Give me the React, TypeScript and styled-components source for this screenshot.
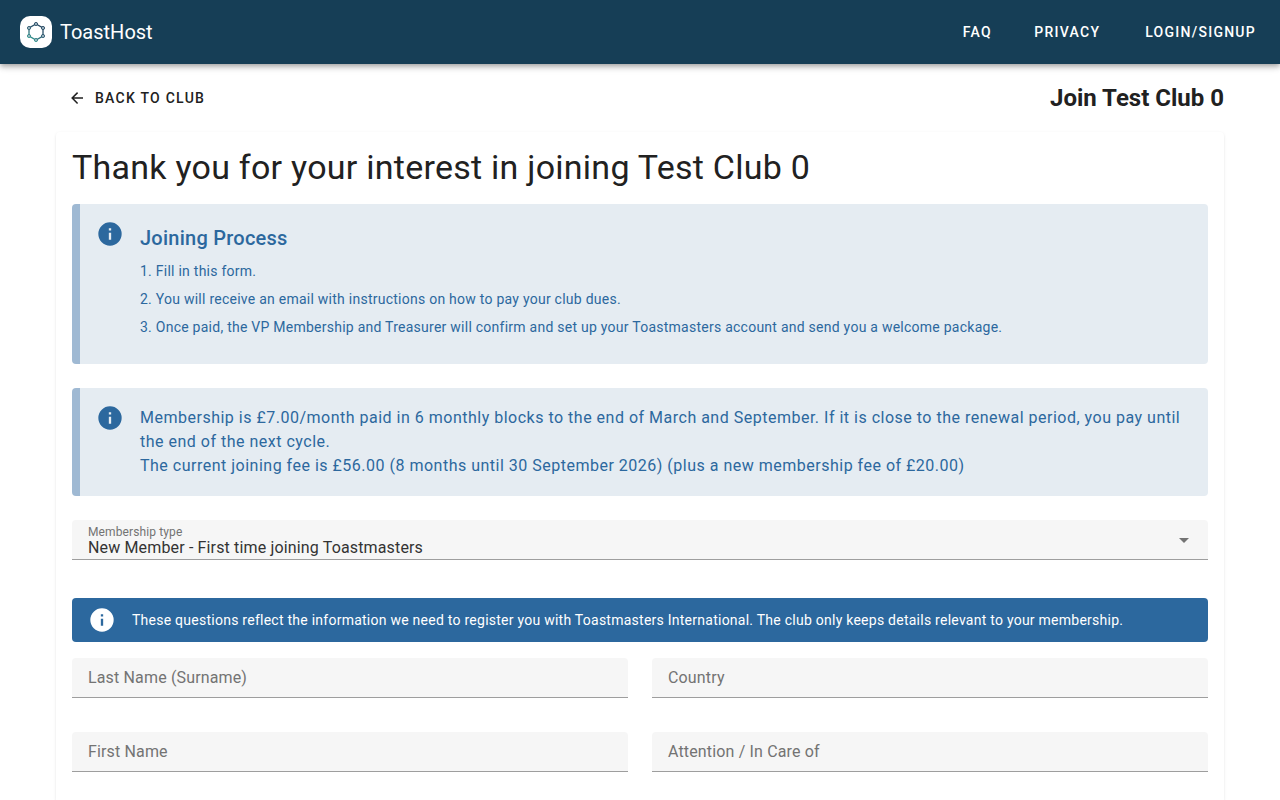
import React from "react";
import styled, { createGlobalStyle } from "styled-components";

const colors = {
  header: "#163e56",
  info: "#2c689e",
  infoTint: "#e5ecf2",
  infoEdge: "#9fb9d3",
  text: "#212121",
  muted: "#737373",
  field: "#f6f6f6",
  line: "#9e9e9e",
};

const GlobalStyle = createGlobalStyle`
  *, *::before, *::after { box-sizing: border-box; }
  body {
    margin: 0;
    background: #fff;
    color: ${colors.text};
    font-family: Roboto, "Liberation Sans", sans-serif;
    font-size: 16px;
    line-height: 24px;
  }
`;

const Page = styled.div`
  min-height: 100vh;
  display: flex;
  flex-direction: column;
`;

const Header = styled.header`
  display: flex;
  align-items: center;
  justify-content: space-between;
  height: 64px;
  padding: 0 8px 0 20px;
  background: ${colors.header};
  color: #fff;
  box-shadow: 0 2px 4px -1px rgba(0, 0, 0, 0.2), 0 4px 5px 0 rgba(0, 0, 0, 0.14),
    0 1px 10px 0 rgba(0, 0, 0, 0.12);
`;

const Brand = styled.a`
  display: flex;
  align-items: center;
  gap: 8px;
  color: inherit;
  text-decoration: none;
  font-size: 20px;
  line-height: 32px;
`;

const Nav = styled.nav`
  display: flex;
  gap: 9px;
`;

const buttonText = `
  font-size: 14px;
  line-height: 20px;
  font-weight: 500;
  letter-spacing: 0.09em;
  text-transform: uppercase;
  text-decoration: none;
`;

const NavLink = styled.a<{ $spaced?: boolean }>`
  ${buttonText}
  display: flex;
  align-items: center;
  justify-content: center;
  min-width: 64px;
  height: 36px;
  padding: 0 16px;
  margin-left: ${(p) => (p.$spaced ? "4px" : "0")};
  color: #fff;
`;

const Main = styled.main`
  flex: 1;
  display: flex;
  flex-direction: column;
  gap: 16px;
  width: 100%;
  max-width: 1200px;
  margin: 0 auto;
  padding: 16px 16px 0;
`;

const TitleBar = styled.div`
  display: flex;
  align-items: center;
  justify-content: space-between;
  height: 36px;
`;

const BackLink = styled.a`
  ${buttonText}
  display: flex;
  align-items: center;
  gap: 9px;
  height: 36px;
  padding: 0 16px 0 12px;
  color: ${colors.text};
`;

const PageTitle = styled.h2`
  margin: 0;
  font-size: 24px;
  line-height: 36px;
  font-weight: 700;
`;

const Card = styled.section`
  flex: 1;
  padding: 16px;
  border-radius: 4px 4px 0 0;
  background: #fff;
  box-shadow: 0 2px 1px -1px rgba(0, 0, 0, 0.04), 0 1px 1px 0 rgba(0, 0, 0, 0.04),
    0 1px 3px 0 rgba(0, 0, 0, 0.1);
`;

const Heading = styled.h1`
  margin: 0 0 18px;
  font-size: 34px;
  line-height: 38px;
  font-weight: 400;
  letter-spacing: 0.0074em;
`;

const Alert = styled.div`
  display: flex;
  gap: 16px;
  margin-bottom: 24px;
  padding: 16px;
  border-left: 8px solid ${colors.infoEdge};
  border-radius: 4px;
  background: ${colors.infoTint};
  color: ${colors.info};
  letter-spacing: 0.03125em;
`;

const Banner = styled.div`
  display: flex;
  align-items: center;
  gap: 16px;
  margin: 38px 0 16px;
  padding: 8px 16px;
  border-radius: 4px;
  background: ${colors.info};
  color: #fff;
  font-size: 14px;
  line-height: 20px;
  letter-spacing: 0.0179em;
`;

const AlertBody = styled.div`
  flex: 1;
  padding: 2px 0;
`;

const AlertText = styled.p`
  margin: 0;
`;

const AlertTitle = styled.h3`
  margin: 0 0 3px;
  font-size: 20px;
  line-height: 32px;
  font-weight: 500;
  letter-spacing: 0.0125em;
`;

const Steps = styled.ol`
  margin: 0;
  padding: 0 0 5px;
  font-size: 14px;
  line-height: 28px;
  letter-spacing: 0.0179em;
  list-style: none;
`;

const FieldBox = styled.div`
  display: grid;
  grid-template-columns: minmax(0, 1fr);
  align-items: center;
  height: 40px;
  border-bottom: 1px solid ${colors.line};
  border-radius: 4px 4px 0 0;
  background: ${colors.field};

  > * {
    grid-area: 1 / 1;
  }
`;

const FieldLabel = styled.label`
  padding: 0 16px;
  color: ${colors.muted};
  letter-spacing: 0.0094em;
  pointer-events: none;
`;

const FloatingLabel = styled(FieldLabel)`
  align-self: start;
  padding-top: 4px;
  font-size: 12px;
  line-height: 16px;
`;

const TextInput = styled.input`
  width: 100%;
  height: 39px;
  padding: 0 16px;
  border: 0;
  outline: 0;
  background: transparent;
  color: ${colors.text};
  font: inherit;

  &:focus + label,
  &:not(:placeholder-shown) + label {
    align-self: start;
    font-size: 12px;
    line-height: 16px;
  }
`;

const SelectInput = styled.select`
  appearance: none;
  width: 100%;
  height: 39px;
  padding: 16px 48px 0 16px;
  border: 0;
  outline: 0;
  background: transparent;
  color: #333;
  font: inherit;
  letter-spacing: 0.0094em;
`;

const Arrow = styled.svg`
  justify-self: end;
  margin-right: 12px;
  pointer-events: none;
`;

const FieldGrid = styled.div`
  display: grid;
  grid-template-columns: repeat(2, minmax(0, 1fr));
  gap: 34px 24px;
`;

const InfoIcon = () => (
  <svg width="28" height="28" viewBox="0 0 24 24" fill="currentColor" aria-hidden="true">
    <path d="M13,9H11V7H13M13,17H11V11H13M12,2A10,10 0 0,0 2,12A10,10 0 0,0 12,22A10,10 0 0,0 22,12A10,10 0 0,0 12,2Z" />
  </svg>
);

const BackIcon = () => (
  <svg width="18" height="18" viewBox="0 0 24 24" fill="currentColor" aria-hidden="true">
    <path d="M20,11V13H8L13.5,18.5L12.08,19.92L4.16,12L12.08,4.08L13.5,5.5L8,11H20Z" />
  </svg>
);

const nodes = [
  [16, 8],
  [23, 12],
  [23, 20],
  [16, 24],
  [9, 20],
  [9, 12],
];

const Logo = () => (
  <svg width="32" height="32" viewBox="0 0 32 32" aria-hidden="true">
    <defs>
      <linearGradient id="ring" gradientUnits="userSpaceOnUse" x1="21" y1="9" x2="11" y2="24">
        <stop offset="0" stopColor="#24445f" />
        <stop offset="0.5" stopColor="#2d5a70" />
        <stop offset="1" stopColor="#2f9c90" />
      </linearGradient>
    </defs>
    <rect width="32" height="32" rx="10" fill="#fff" />
    <polygon
      points={nodes.map((n) => n.join(",")).join(" ")}
      fill="none"
      stroke="url(#ring)"
      strokeWidth="1.3"
    />
    {nodes.map(([x, y]) => (
      <circle key={`${x}-${y}`} cx={x} cy={y} r="1.6" fill="#a3b9c4" stroke="url(#ring)" strokeWidth="0.9" />
    ))}
  </svg>
);

const TextField = ({ id, label }: { id: string; label: string }) => (
  <FieldBox>
    <TextInput id={id} type="text" placeholder=" " />
    <FieldLabel htmlFor={id}>{label}</FieldLabel>
  </FieldBox>
);

const steps = [
  "Fill in this form.",
  "You will receive an email with instructions on how to pay your club dues.",
  "Once paid, the VP Membership and Treasurer will confirm and set up your Toastmasters account and send you a welcome package.",
];

const fields = [
  { id: "last-name", label: "Last Name (Surname)" },
  { id: "country", label: "Country" },
  { id: "first-name", label: "First Name" },
  { id: "attention", label: "Attention / In Care of" },
];

export default function App() {
  return (
    <Page>
      <GlobalStyle />
      <Header>
        <Brand href="#home">
          <Logo />
          ToastHost
        </Brand>
        <Nav>
          <NavLink href="#faq">FAQ</NavLink>
          <NavLink href="#privacy">Privacy</NavLink>
          <NavLink href="#login" $spaced>Login/Signup</NavLink>
        </Nav>
      </Header>
      <Main>
        <TitleBar>
          <BackLink href="#club">
            <BackIcon />
            Back to club
          </BackLink>
          <PageTitle>Join Test Club 0</PageTitle>
        </TitleBar>
        <Card>
          <Heading>Thank you for your interest in joining Test Club 0</Heading>
          <Alert>
            <InfoIcon />
            <AlertBody>
              <AlertTitle>Joining Process</AlertTitle>
              <Steps>
                {steps.map((step, i) => (
                  <li key={step}>{`${i + 1}. ${step}`}</li>
                ))}
              </Steps>
            </AlertBody>
          </Alert>
          <Alert>
            <InfoIcon />
            <AlertBody>
              <AlertText>
                Membership is £7.00/month paid in 6 monthly blocks to the end of March and September. If it is
                close to the renewal period, you pay until the end of the next cycle.
              </AlertText>
              <AlertText>
                The current joining fee is £56.00 (8 months until 30 September 2026) (plus a new membership fee of
                £20.00)
              </AlertText>
            </AlertBody>
          </Alert>
          <FieldBox>
            <SelectInput id="membership-type" defaultValue="new">
              <option value="new">New Member - First time joining Toastmasters</option>
            </SelectInput>
            <FloatingLabel htmlFor="membership-type">Membership type</FloatingLabel>
            <Arrow width="24" height="24" viewBox="0 0 24 24" fill={colors.muted} aria-hidden="true">
              <path d="M7,10L12,15L17,10H7Z" />
            </Arrow>
          </FieldBox>
          <Banner>
            <InfoIcon />
            <AlertText>
              These questions reflect the information we need to register you with Toastmasters International. The
              club only keeps details relevant to your membership.
            </AlertText>
          </Banner>
          <FieldGrid>
            {fields.map((f) => (
              <TextField key={f.id} {...f} />
            ))}
          </FieldGrid>
        </Card>
      </Main>
    </Page>
  );
}
